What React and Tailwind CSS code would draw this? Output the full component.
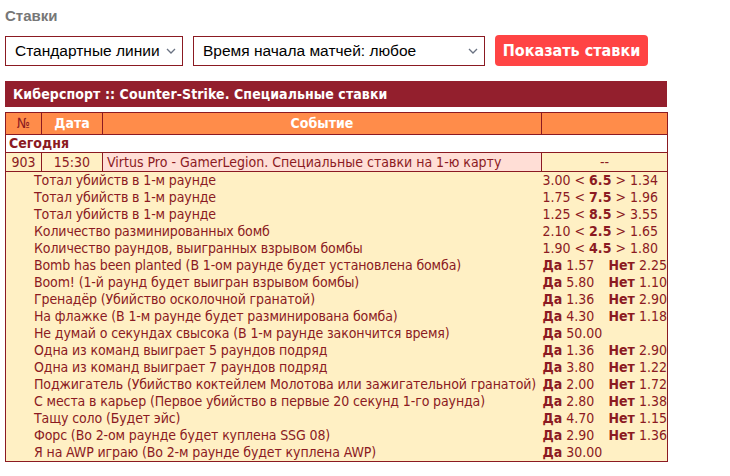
import React from 'react';

const bets = [
  { name: 'Тотал убийств в 1-м раунде', total: ['3.00', '6.5', '1.34'] },
  { name: 'Тотал убийств в 1-м раунде', total: ['1.75', '7.5', '1.96'] },
  { name: 'Тотал убийств в 1-м раунде', total: ['1.25', '8.5', '3.55'] },
  { name: 'Количество разминированных бомб', total: ['2.10', '2.5', '1.65'] },
  { name: 'Количество раундов, выигранных взрывом бомбы', total: ['1.90', '4.5', '1.80'] },
  { name: 'Bomb has been planted (В 1-ом раунде будет установлена бомба)', yes: '1.57', no: '2.25' },
  { name: 'Boom! (1-й раунд будет выигран взрывом бомбы)', yes: '5.80', no: '1.10' },
  { name: 'Гренадёр (Убийство осколочной гранатой)', yes: '1.36', no: '2.90' },
  { name: 'На флажке (В 1-м раунде будет разминирована бомба)', yes: '4.30', no: '1.18' },
  { name: 'Не думай о секундах свысока (В 1-м раунде закончится время)', yes: '50.00' },
  { name: 'Одна из команд выиграет 5 раундов подряд', yes: '1.36', no: '2.90' },
  { name: 'Одна из команд выиграет 7 раундов подряд', yes: '3.80', no: '1.22' },
  { name: 'Поджигатель (Убийство коктейлем Молотова или зажигательной гранатой)', yes: '2.00', no: '1.72' },
  { name: 'С места в карьер (Первое убийство в первые 20 секунд 1-го раунда)', yes: '2.80', no: '1.38' },
  { name: 'Тащу соло (Будет эйс)', yes: '4.70', no: '1.15' },
  { name: 'Форс (Во 2-ом раунде будет куплена SSG 08)', yes: '2.90', no: '1.36' },
  { name: 'Я на AWP играю (Во 2-м раунде будет куплена AWP)', yes: '30.00' },
];

function Chevron() {
  return (
    <svg width="10" height="6" viewBox="0 0 10 6" className="text-gray-500 shrink-0">
      <path d="M1 1l4 4 4-4" fill="none" stroke="currentColor" strokeWidth="1.3" />
    </svg>
  );
}

function FakeSelect({ label, width }) {
  return (
    <div className={`${width} h-[30px] border border-[#8b1a22] bg-white flex items-center justify-between pl-[9px] pr-[6px] text-[15.5px] text-black`}>
      <span className="whitespace-nowrap">{label}</span>
      <Chevron />
    </div>
  );
}

export default function App() {
  const tahoma = { fontFamily: "'DejaVu Sans Condensed', 'DejaVu Sans', sans-serif" };
  return (
    <div className="w-[730px] h-[476px] bg-white p-[5px] pt-[7px] font-['Liberation_Sans',sans-serif]">
      <h1 className="text-[15px] font-bold text-[#777] leading-[18px] mb-[10px]">Ставки</h1>

      <div className="flex items-center gap-[10px] mb-[15px]">
        <FakeSelect label="Стандартные линии" width="w-[178px]" />
        <FakeSelect label="Время начала матчей: любое" width="w-[292px]" />
        <button
          className="h-[31px] w-[153px] rounded-[4px] bg-[#ff4444] text-white font-bold text-[16px] font-stretch-condensed"
          style={tahoma}
        >
          Показать ставки
        </button>
      </div>

      <div className="w-[662px] font-stretch-condensed" style={tahoma}>
        <div className="h-[26px] bg-[#931f2d] text-white font-bold text-[14px] tracking-[0.08px] leading-[26px] pl-[8px]">
          Киберспорт :: Counter-Strike. Специальные ставки
        </div>

        <table className="mt-[5px] w-[662px] border-collapse table-fixed text-[14px] text-[#8b1a22] border border-[#8b1a22]">
          <colgroup>
            <col className="w-[36px]" />
            <col className="w-[61px]" />
            <col className="w-[439px]" />
            <col className="w-[126px]" />
          </colgroup>
          <thead>
            <tr className="bg-[#ff8c4a] h-[22px]">
              <th className="border border-[#8b1a22] font-normal text-[#8b1a22]">№</th>
              <th className="border border-[#8b1a22] font-bold text-white">Дата</th>
              <th className="border border-[#8b1a22] font-bold text-white">Событие</th>
              <th className="border border-[#8b1a22]"></th>
            </tr>
          </thead>
          <tbody>
            <tr className="bg-white h-[18px]">
              <td colSpan={4} className="font-bold pl-[3px] leading-[17px]">Сегодня</td>
            </tr>
            <tr className="h-[19px] leading-[17px]">
              <td className="bg-[#fff0c4] border border-[#8b1a22] text-center">903</td>
              <td className="bg-[#fff0c4] border border-[#8b1a22] text-center">15:30</td>
              <td className="bg-[#ffded6] border border-[#8b1a22] pl-[4px] whitespace-nowrap">
                Virtus Pro - GamerLegion. Специальные ставки на 1-ю карту
              </td>
              <td className="bg-[#fff0c4] border border-[#8b1a22] text-center">--</td>
            </tr>
            {bets.map((b, i) => (
              <tr key={i} className="bg-[#fff0c4] h-[17px] leading-[17px]">
                <td colSpan={3} className="pl-[28px] whitespace-nowrap tracking-[-0.12px]">{b.name}</td>
                <td className="pl-[1px] whitespace-nowrap">
                  {b.total ? (
                    <span>
                      {b.total[0]} &lt; <b>{b.total[1]}</b> &gt; {b.total[2]}
                    </span>
                  ) : (
                    <span className="flex">
                      <span className="w-[66px]"><b>Да</b> {b.yes}</span>
                      {b.no && <span><b>Нет</b> {b.no}</span>}
                    </span>
                  )}
                </td>
              </tr>
            ))}
          </tbody>
        </table>
      </div>
    </div>
  );
}
